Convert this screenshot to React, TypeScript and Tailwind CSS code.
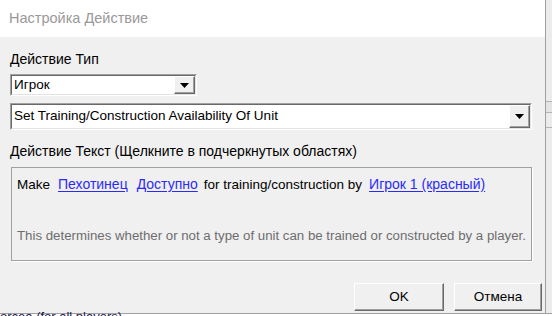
import React from 'react';

const sans = { fontFamily: '"Liberation Sans", Arial, sans-serif' };

function DropArrow() {
  return (
    <div className="flex h-full w-[21px] items-center justify-center border border-t-white border-l-white border-r-[#696969] border-b-[#696969] bg-[#f0f0f0] shadow-[inset_-1px_-1px_0_#a0a0a0]">
      <svg width="9" height="5" viewBox="0 0 9 5">
        <path d="M0 0h9L4.5 5z" fill="#000" />
      </svg>
    </div>
  );
}

function Combo({ value, className }: { value: string; className: string }) {
  return (
    <div
      className={`flex items-stretch border border-t-[#a0a0a0] border-l-[#a0a0a0] border-r-white border-b-white bg-white ${className}`}
    >
      <div className="flex flex-1 items-stretch border border-t-[#696969] border-l-[#696969] border-r-[#e3e3e3] border-b-[#e3e3e3]">
        <div className="flex flex-1 items-center pl-[2px] text-[13.5px] text-black">{value}</div>
        <DropArrow />
      </div>
    </div>
  );
}

function Link({ children, className }: { children: React.ReactNode; className: string }) {
  return (
    <span className={`text-[#2a2aff] underline decoration-[#2a2aff] underline-offset-[2px] ${className}`}>
      {children}
    </span>
  );
}

function WinButton({ label, className }: { label: string; className: string }) {
  return (
    <button
      className={`flex h-[28px] items-center justify-center border border-t-white border-l-white border-r-[#696969] border-b-[#696969] bg-[#f0f0f0] text-[13.5px] text-black shadow-[inset_-1px_-1px_0_#a0a0a0] ${className}`}
    >
      {label}
    </button>
  );
}

export default function App() {
  return (
    <div className="flex h-[316px] w-[552px] flex-col overflow-hidden bg-[#f0f0f0]" style={sans}>
      <div className="flex h-[313px]">
        <div className="flex w-[546px] flex-col border-r border-[#a0a0a0]">
          <div className="flex h-[37px] items-center bg-white pl-[9px] text-[14.5px] text-[#999999]">
            Настройка Действие
          </div>
          <div className="flex flex-1 flex-col bg-[#f0f0f0] pl-[10px]">
            <div className="mt-[14px] h-[16px] text-[14px] leading-[16px] text-black">Действие Тип</div>
            <Combo value="Игрок" className="mt-[7px] h-[22px] w-[187px]" />
            <Combo value="Set Training/Construction Availability Of Unit" className="mt-[7px] h-[27px] w-[522px]" />
            <div className="mt-[13px] h-[16px] text-[14px] leading-[16px] text-black">
              Действие Текст (Щелкните в подчеркнутых областях)
            </div>
            <div className="ml-[1px] mt-[8px] h-[94px] w-[521px] border border-[#a0a0a0] pl-[5px] pt-[8px] shadow-[1px_1px_0_#ffffff] text-[13.5px] leading-[16px]">
              <div className="whitespace-nowrap text-black">
                Make
                <Link className="ml-[8px] text-[14px]">Пехотинец</Link>
                <Link className="ml-[9px] text-[14px]">Доступно</Link>
                <span className="ml-[6px]">for training/construction by</span>
                <Link className="ml-[7px] text-[14px]">Игрок 1 (красный)</Link>
              </div>
              <div className="mt-[35px] whitespace-nowrap text-[13.25px] text-[#6d6d6d]">
                This determines whether or not a type of unit can be trained or constructed by a player.
              </div>
            </div>
            <div className="mt-[22px] flex">
              <WinButton label="OK" className="ml-[344px] w-[90px]" />
              <WinButton label="Отмена" className="ml-[10px] w-[88px]" />
            </div>
          </div>
        </div>
        <div className="flex w-[6px] flex-col bg-[#ececec]">
          <div className="h-[101px] shrink-0" />
          <div className="h-[12px] shrink-0 border-y border-[#b4b4b4] bg-[#e4e4e4]" />
          <div className="h-[14px] shrink-0" />
          <div className="h-[2px] shrink-0 border-t border-[#b4b4b4]" />
        </div>
      </div>
      <div className="h-[3px] border-t border-[#a0a0a0] bg-white">
        <div className="-mt-[4px] whitespace-nowrap text-[13px] leading-[14px] text-[#1a1a4a]">orcea (for all players)</div>
      </div>
    </div>
  );
}
